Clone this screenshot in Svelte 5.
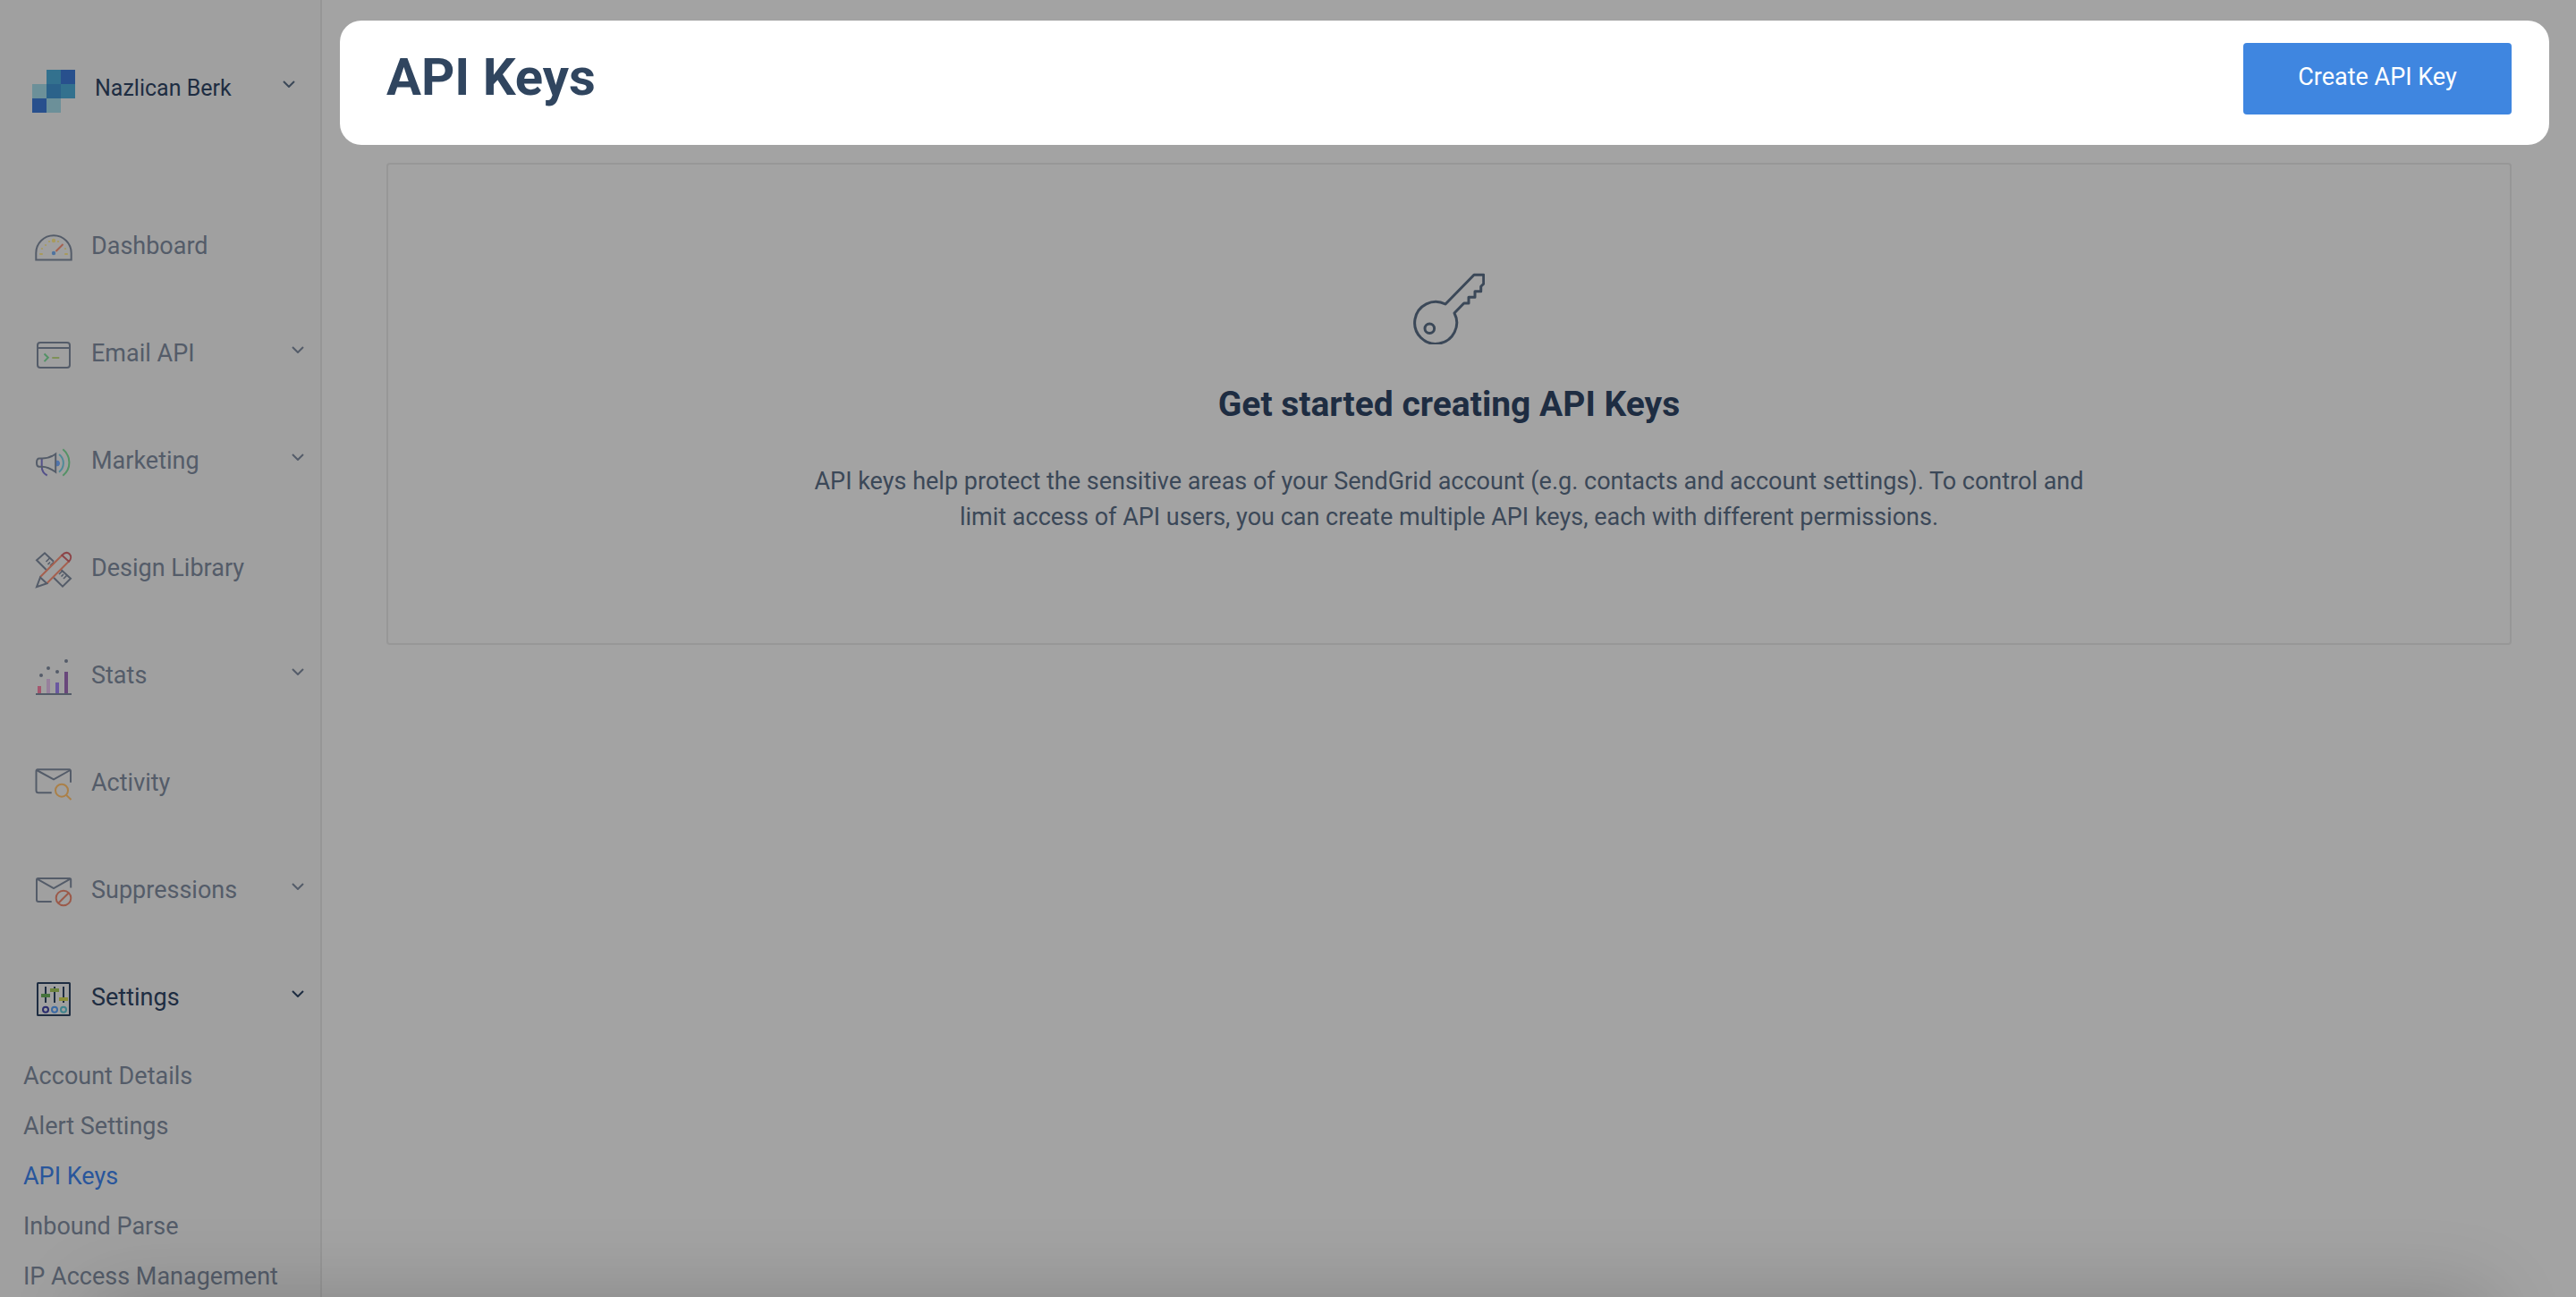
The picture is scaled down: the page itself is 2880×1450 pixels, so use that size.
<script lang="ts">
	const navItems = [
		{ id: 'dashboard', label: 'Dashboard', expandable: false },
		{ id: 'email', label: 'Email API', expandable: true },
		{ id: 'marketing', label: 'Marketing', expandable: true },
		{ id: 'design', label: 'Design Library', expandable: false },
		{ id: 'stats', label: 'Stats', expandable: true },
		{ id: 'activity', label: 'Activity', expandable: false },
		{ id: 'suppressions', label: 'Suppressions', expandable: true },
		{ id: 'settings', label: 'Settings', expandable: true }
	];

	const settingsLinks = [
		'Account Details',
		'Alert Settings',
		'API Keys',
		'Inbound Parse',
		'IP Access Management'
	];

	let openItem = $state('settings');
	let currentPage = $state('API Keys');

	function toggle(id: string) {
		openItem = openItem === id ? '' : id;
	}
</script>

{#snippet chevron()}
	<svg class="chevron" viewBox="0 0 14 8" aria-hidden="true">
		<path d="M1 1l6 6 6-6" />
	</svg>
{/snippet}

{#snippet navIcon(id: string)}
	<svg class="icon" viewBox="0 0 48 48" aria-hidden="true">
		{#if id === 'dashboard'}
			<path d="M4.3 37.5V30a19.7 19.7 0 0 1 39.4 0v7.5z" />
			<path d="M26.5 28l8-8" stroke="#a5604f" />
			<g stroke="none" fill="#a89a5c">
				<circle cx="24" cy="16" r="2.2" />
				<circle cx="19" cy="17" r="1.1" />
				<circle cx="29" cy="17" r="1.1" />
				<circle cx="15" cy="21" r="1.1" />
				<circle cx="11" cy="25" r="1.1" />
				<circle cx="37" cy="25" r="1.1" />
				<rect x="8" y="30" width="4" height="2" rx="1" />
				<rect x="36" y="30" width="4" height="2" rx="1" />
			</g>
			<circle cx="24" cy="30" r="2.2" stroke="none" fill="#4f739f" />
		{:else if id === 'email'}
			<rect x="6" y="10" width="36" height="28" rx="3" />
			<path d="M6 16h36" />
			<path d="M13.5 22.5l4.3 4.3-4.3 4.3" stroke="#549266" />
			<path d="M22.3 27h8" stroke="#7f9158" />
		{:else if id === 'marketing'}
			<path d="M10.7 20v8.5c0 5 2 8 6 10" stroke="#54518a" />
			<path d="M26.2 14.5c-5 3.5-9.7 5-15 5H8c-2.2 0-3 1.5-3 4.7s.8 4.6 3 4.6h3.2c5.3 0 10 2.5 15 6z" />
			<path d="M27.5 22a3 3 0 0 1 0 6z" stroke="#4f73ab" fill="#4f73ab" stroke-width="1" />
			<path d="M30 15c6.5 5 6.5 14.5 0 19.7" stroke="#4f8a98" />
			<path d="M34.3 9.3c9.5 7.5 9.5 22 0 29.4" stroke="#549266" />
		{:else if id === 'design'}
			<path d="M15.7 24L5 13.3l9-8 10 9.5" />
			<path d="M32.3 24L43 33.7l-9 9L24 32.7" />
			<path
				d="M15.5 15l4-4M17.5 18l2.5-2.5M20 19.5l4-4M30 29l4-4M32.5 31.5l2.5-2.5M35 34l4-4"
				stroke-width="1.6"
			/>
			<path d="M9 32L33.3 7.7M16.3 39.3L41 14.5" stroke="#a5604f" />
			<path d="M33.3 7.7l7.7 7c2.5-2.5 3-6 .6-8.4s-5.8-1.1-8.3 1.4z" stroke="#8c4448" />
			<path d="M9 32.5l7.3 6.8L5 43.2z" />
		{:else if id === 'stats'}
			<g stroke="none">
				<rect x="6" y="34" width="4" height="8" fill="#a5566e" />
				<rect x="16" y="26" width="4" height="16" fill="#97809c" />
				<rect x="26" y="30" width="4" height="12" fill="#6a58a0" />
				<rect x="36" y="18" width="4" height="24" fill="#69477b" />
				<g fill="#545c69">
					<circle cx="10" cy="22" r="2" />
					<circle cx="18" cy="14" r="2" />
					<circle cx="28" cy="18" r="2" />
					<circle cx="38" cy="6" r="2" />
				</g>
			</g>
			<path d="M4 43h40" />
		{:else if id === 'activity'}
			<path d="M21.7 33.3H7a2.5 2.5 0 0 1-2.5-2.5V9A1.5 1.5 0 0 1 6 7.3h35.5A1.5 1.5 0 0 1 43 9v12.7" />
			<path d="M5 8l19 10.3L42.5 8" />
			<g stroke="#ab8048">
				<circle cx="33" cy="30.7" r="7" />
				<path d="M38 35.7l5.5 5.3" />
			</g>
		{:else if id === 'suppressions'}
			<path d="M21.7 35H7a2 2 0 0 1-2-2V10.5A1.5 1.5 0 0 1 6.5 9h35A1.5 1.5 0 0 1 43.2 10.5v9" />
			<path d="M5.5 9.7L24 20 42.5 9.7" />
			<g stroke="#9b5a4a">
				<circle cx="35" cy="31" r="8.3" />
				<path d="M29.2 36.8l11.6-11.6" />
			</g>
		{:else if id === 'settings'}
			<rect x="6" y="6" width="36" height="36" rx="0.5" />
			<path d="M15 10v18M25 10v18M35 10v18" />
			<g stroke="none">
				<rect x="10" y="18" width="10" height="4" fill="#45733c" />
				<rect x="20" y="12" width="10" height="4" fill="#6c833c" />
				<rect x="30" y="22" width="10" height="4" fill="#8c8f38" />
			</g>
			<circle cx="15" cy="35.7" r="3" stroke="#2b2c6e" />
			<circle cx="25" cy="35.7" r="3" stroke="#3a69a4" />
			<circle cx="35" cy="35.7" r="3" stroke="#3f838d" />
		{/if}
	</svg>
{/snippet}

<div class="page">
	<aside class="sidebar">
		<button class="account" type="button">
			<svg class="logo" viewBox="0 0 6 6" shape-rendering="crispEdges" aria-hidden="true">
				<path d="M2 0h2v2H2zM4 2h2v2H4z" fill="#33718e" />
				<path d="M4 0h2v2H4zM0 4h2v2H0z" fill="#28508d" />
				<path d="M0 2h2v2H0zM2 4h2v2H2z" fill="#6c9099" />
				<path d="M2 2h2v2H2z" fill="#2b628a" />
			</svg>
			<span class="label">Nazlican Berk</span>
			{@render chevron()}
		</button>

		<nav>
			{#each navItems as item (item.id)}
				{#if item.expandable}
					<button
						class="nav-item"
						class:open={openItem === item.id}
						type="button"
						aria-expanded={openItem === item.id}
						onclick={() => toggle(item.id)}
					>
						{@render navIcon(item.id)}
						<span class="label">{item.label}</span>
						{@render chevron()}
					</button>
				{:else}
					<a class="nav-item" href="#{item.id}">
						{@render navIcon(item.id)}
						<span class="label">{item.label}</span>
					</a>
				{/if}
			{/each}

			{#if openItem === 'settings'}
				<ul class="sub-nav">
					{#each settingsLinks as link}
						<li>
							<a
								class:current={currentPage === link}
								href="#settings"
								onclick={() => (currentPage = link)}>{link}</a
							>
						</li>
					{/each}
				</ul>
			{/if}
		</nav>
	</aside>

	<main>
		<header class="page-header">
			<h1>API Keys</h1>
			<button class="create" type="button">Create API Key</button>
		</header>

		<section class="empty-state">
			<svg class="key" viewBox="0 0 80 80" aria-hidden="true">
				<path d="M36 35L68 2.3h10.7v10l-3 3v5.4H69v6.6h-7V34h-5.3L46 45a23.5 23.5 0 1 1-10-10z" />
				<circle cx="18.3" cy="62.3" r="5.3" />
			</svg>
			<h2>Get started creating API Keys</h2>
			<p>
				API keys help protect the sensitive areas of your SendGrid account (e.g. contacts and
				account settings). To control and limit access of API users, you can create multiple API
				keys, each with different permissions.
			</p>
		</section>
	</main>
</div>

<style>
	:global(body) {
		background: #a3a3a3;
	}

	.page {
		position: relative;
		display: flex;
		height: 100vh;
		overflow: hidden;
		font-family: Roboto, 'Liberation Sans', sans-serif;
		font-size: 27px;
		color: #545c69;
	}

	/* soft shade rising from the bottom edge */
	.page::after {
		content: '';
		position: absolute;
		top: 100%;
		left: 100px;
		right: 100px;
		height: 200px;
		box-shadow: 0 0 90px rgba(0, 0, 0, 0.18);
		pointer-events: none;
	}

	button {
		border: 0;
		background: none;
		font: inherit;
		color: inherit;
		text-align: left;
		cursor: pointer;
	}

	a {
		color: inherit;
		text-decoration: none;
	}

	.sidebar {
		flex: none;
		box-sizing: border-box;
		width: 360px;
		border-right: 2px solid #969696;
		background: #a0a0a0;
	}

	.account,
	.nav-item {
		display: flex;
		align-items: center;
		box-sizing: border-box;
		width: 100%;
		padding: 0 18px 2px 36px;
	}

	.label {
		flex: 1;
	}

	.account {
		height: 216px;
		padding: 0 28px 20px 36px;
		gap: 22px;
		font-size: 25px;
		color: #1e2d42;
	}

	.account .chevron {
		color: #3b4858;
	}

	.logo {
		width: 48px;
		height: 48px;
		margin-top: 8px;
	}

	.nav-item {
		height: 120px;
		gap: 18px;
	}

	.nav-item.open {
		color: #1e2d42;
	}

	.icon {
		width: 48px;
		height: 48px;
		margin-top: 4px;
		fill: none;
		stroke: currentColor;
		stroke-width: 2;
	}

	.chevron {
		width: 14px;
		height: 8px;
		margin-bottom: 8px;
		fill: none;
		stroke: currentColor;
		stroke-width: 2;
	}

	.sub-nav {
		margin: 0;
		padding: 0 26px;
		list-style: none;
	}

	.sub-nav a {
		display: block;
		padding-bottom: 2px;
		line-height: 54px;
		white-space: nowrap;
	}

	.sub-nav .current {
		color: #29569b;
	}

	main {
		flex: 1;
		padding: 23px 30px 0 20px;
	}

	.page-header {
		display: flex;
		align-items: flex-start;
		justify-content: space-between;
		padding: 25px 42px 34px 52px;
		border-radius: 24px;
		background: #fff;
	}

	h1 {
		margin: 0;
		font-size: 58px;
		line-height: 76px;
		font-weight: 700;
		color: #30455f;
	}

	.create {
		width: 300px;
		height: 80px;
		padding: 0 0 4px;
		border-radius: 4px;
		background: #3f86e0;
		color: #fff;
		text-align: center;
	}

	.empty-state {
		display: flex;
		flex-direction: column;
		align-items: center;
		margin: 20px 42px 0 52px;
		padding: 121px 40px;
		border: 2px solid #979797;
		border-radius: 4px;
		text-align: center;
		color: #3b4858;
	}

	.key {
		width: 80px;
		height: 80px;
		fill: none;
		stroke: currentColor;
		stroke-width: 3;
		stroke-linejoin: round;
	}

	h2 {
		margin: 39px 0 38px;
		font-size: 39px;
		line-height: 56px;
		font-weight: 700;
		color: #1e2d42;
	}

	p {
		max-width: 1440px;
		margin: 0;
		line-height: 40px;
	}
</style>
